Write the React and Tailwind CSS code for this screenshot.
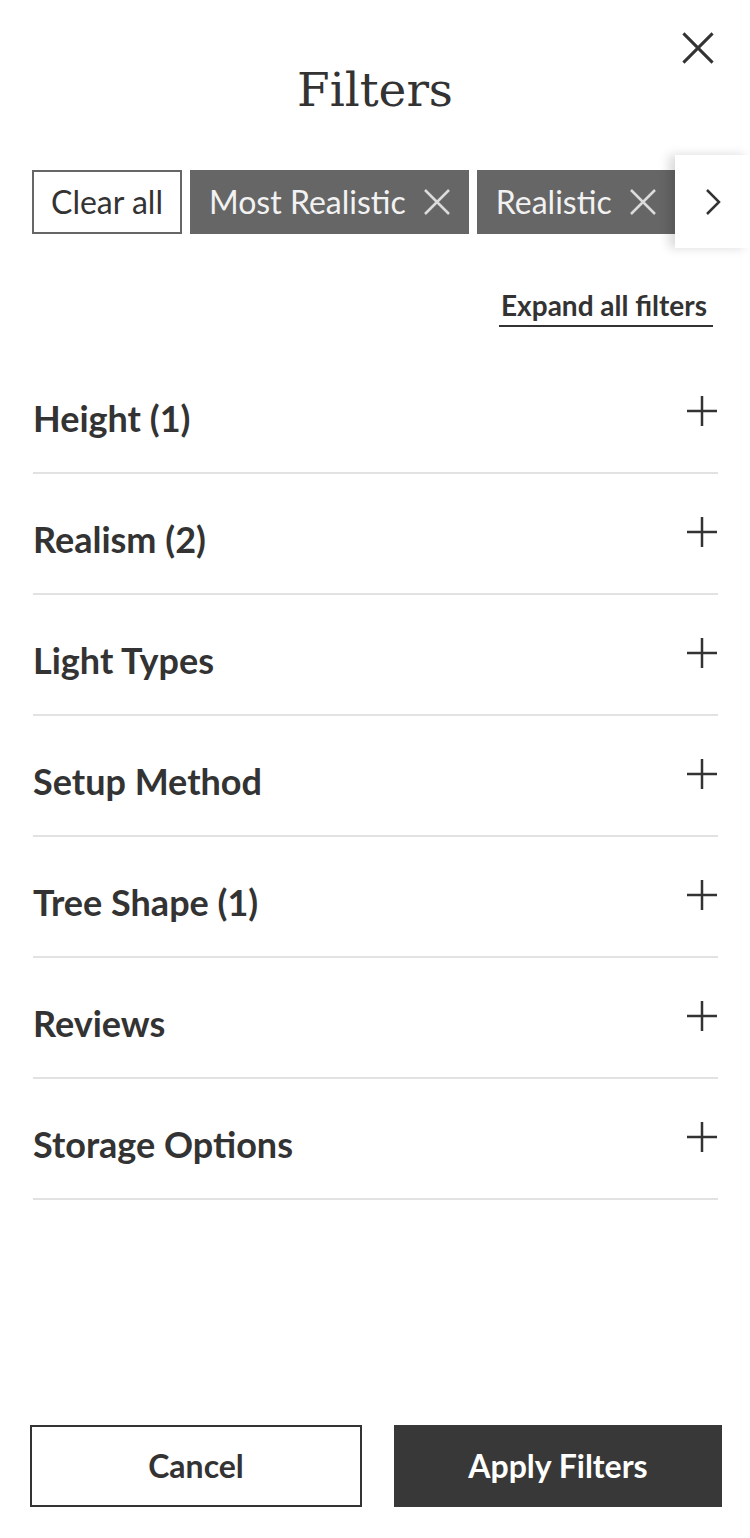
const rows = [
  "Height (1)",
  "Realism (2)",
  "Light Types",
  "Setup Method",
  "Tree Shape (1)",
  "Reviews",
  "Storage Options",
];

const chips = ["Most Realistic", "Realistic"];

const XIcon = ({ size = 28, stroke = "currentColor", width = 2 }) => (
  <svg width={size} height={size} viewBox="0 0 28 28" fill="none">
    <path d="M2 2L26 26M26 2L2 26" stroke={stroke} strokeWidth={width} />
  </svg>
);

const PlusIcon = () => (
  <svg width="30" height="30" viewBox="0 0 30 30" fill="none">
    <path d="M15 0V30M0 15H30" stroke="#333" strokeWidth="2.5" />
  </svg>
);

export default function App() {
  return (
    <div className="h-[1538px] w-[750px] bg-white flex flex-col text-[#333] font-['Lato',sans-serif] overflow-hidden">
      {/* Header */}
      <div className="relative h-[150px]">
        <h1 className="pt-[60px] text-center text-[47px] leading-[60px] font-['DejaVu_Serif',serif] text-[#333]">
          Filters
        </h1>
        <button className="absolute top-[31px] right-[35px] text-[#333]">
          <XIcon size={34} width={2.5} />
        </button>
      </div>

      {/* Active chips */}
      <div className="relative mt-[20px] h-[64px]">
        <div className="flex gap-[8px] pl-[32px] overflow-hidden">
          <button className="shrink-0 h-[64px] w-[150px] border-2 border-[#666] text-[32px] text-[#333] flex items-center justify-center">
            Clear all
          </button>
          {chips.map((c) => (
            <div
              key={c}
              className="shrink-0 h-[64px] bg-[#666] text-[#f2f2f2] text-[32px] flex items-center pl-[19px] pr-[18px] gap-[17px]"
            >
              <span>{c}</span>
              <XIcon size={28} stroke="#dcdcdc" width={2.5} />
            </div>
          ))}
        </div>
        <div className="absolute right-0 top-[-15px] h-[93px] w-[75px] bg-white shadow-[-6px_0_10px_rgba(0,0,0,0.15)] flex items-center justify-center">
          <svg width="16" height="28" viewBox="0 0 16 28" fill="none">
            <path d="M2 2L14 14L2 26" stroke="#333" strokeWidth="2.5" />
          </svg>
        </div>
      </div>

      {/* Expand */}
      <div className="flex justify-end pr-[37px] mt-[55px]">
        <button className="text-[28px] font-bold leading-[32px] pl-[2px] pr-[6px] pb-[4px] border-b-2 border-[#333] text-[#333]">
          Expand all filters
        </button>
      </div>

      {/* Filter groups */}
      <div className="mt-[26px] pl-[33px] pr-[32px]">
        {rows.map((r) => (
          <div
            key={r}
            className="h-[121px] border-b-2 border-[#e2e2e2] flex items-start justify-between"
          >
            <span className="pt-[45px] text-[36px] leading-[40px] font-bold text-[#333]">{r}</span>
            <span className="mt-[43px] mr-[1px]">
              <PlusIcon />
            </span>
          </div>
        ))}
      </div>

      {/* Footer */}
      <div className="mt-auto flex gap-[32px] pl-[30px] pr-[28px] pb-[31px]">
        <button className="flex-1 h-[82px] border-2 border-[#333] bg-white text-[32px] font-bold text-[#333]">
          Cancel
        </button>
        <button className="flex-1 h-[82px] bg-[#383838] text-[32px] font-bold text-white">
          Apply Filters
        </button>
      </div>
    </div>
  );
}
